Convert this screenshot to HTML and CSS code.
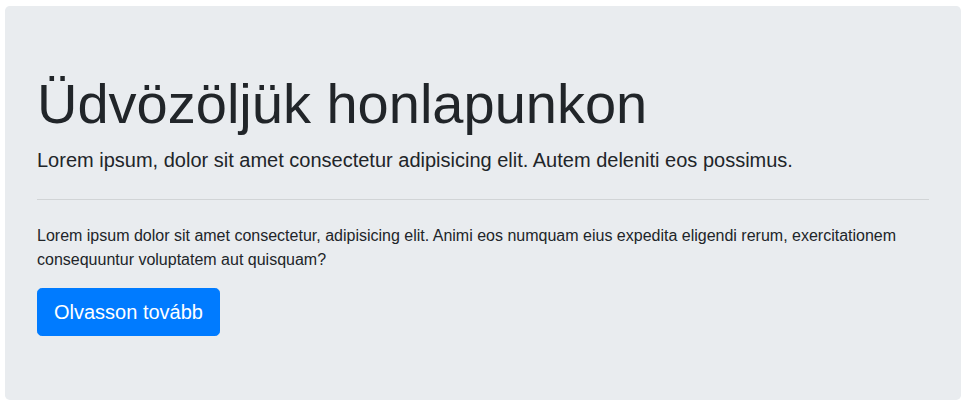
FILE: index.html
```html
<!DOCTYPE html>
<html lang="hu">
<head>
<meta charset="utf-8">
<title>Jumbotron</title>
<link rel="stylesheet" href="styles.css">
</head>
<body>
<div class="jumbotron">
  <h1 class="display">Üdvözöljük honlapunkon</h1>
  <p class="lead">Lorem ipsum, dolor sit amet consectetur adipisicing elit. Autem deleniti eos possimus.</p>
  <hr class="divider">
  <p class="text">Lorem ipsum dolor sit amet consectetur, adipisicing elit. Animi eos numquam eius expedita eligendi rerum, exercitationem consequuntur voluptatem aut quisquam?</p>
  <a class="btn" href="#">Olvasson tovább</a>
</div>
</body>
</html>
```

FILE: styles.css
```css
* { box-sizing: border-box; }
html, body { margin: 0; padding: 0; }
body {
  font-family: "Liberation Sans", Arial, sans-serif;
  font-size: 16px;
  line-height: 1.5;
  color: #212529;
  background: #fff;
}
.jumbotron {
  margin: 6px 7px 7px 5px;
  padding: 64px 32px;
  background: #e9ecef;
  border-radius: 4.8px;
}
.display {
  margin: 0 0 8px;
  font-size: 56px;
  font-weight: 300;
  line-height: 1.2;
}
.lead {
  margin: 0;
  font-size: 20px;
  font-weight: 300;
  line-height: 1.5;
}
.divider {
  margin: 24px 0;
  border: 0;
  border-top: 1px solid rgba(0,0,0,.1);
  height: 0;
}
.text {
  margin: 0 0 16px;
  font-size: 16px;
  line-height: 1.5;
}
.btn {
  display: inline-block;
  padding: 8px 16px;
  font-size: 20px;
  line-height: 1.5;
  color: #fff;
  background: #007bff;
  border: 1px solid #007bff;
  border-radius: 4.8px;
  text-decoration: none;
}
```
